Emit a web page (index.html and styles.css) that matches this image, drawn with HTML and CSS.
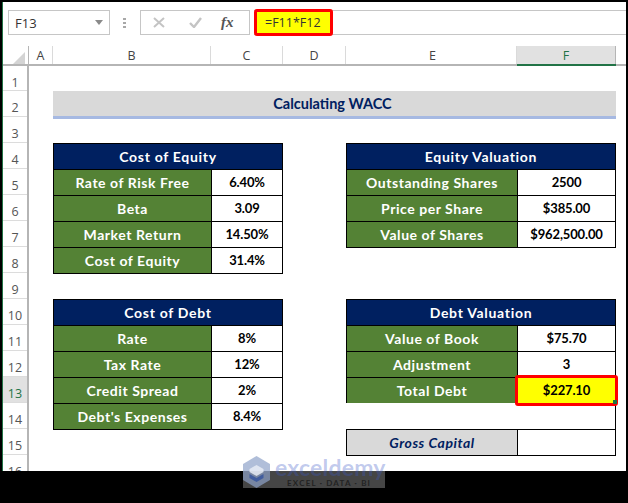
FILE: index.html
```html
<!DOCTYPE html>
<html lang="en">
<head>
<meta charset="utf-8">
<title>Calculating WACC</title>
<link rel="stylesheet" href="styles.css">
</head>
<body>
<div class="app">
  <div class="toolbar">
    <div class="namebox"><span>F13</span><svg class="caret" width="8" height="5" viewBox="0 0 8 5"><path d="M0 0h8L4 5z" fill="#8a8a8a"/></svg></div>
    <svg class="grip" width="4" height="10" viewBox="0 0 4 10"><path d="M0 0h3v2H0zM0 4h3v2H0zM0 8h3v2H0z" fill="#a8a8a8"/></svg>
    <div class="fxbox">
      <svg width="12" height="11" viewBox="0 0 12 11"><path d="M1 1l10 9M11 1L1 10" stroke="#c4c4c4" stroke-width="2" fill="none"/></svg>
      <svg width="13" height="11" viewBox="0 0 13 11"><path d="M1 6l4 4 7-9" stroke="#c4c4c4" stroke-width="2.4" fill="none"/></svg>
      <span class="fx">fx</span>
    </div>
    <div class="formula"><div class="formula-hl">=F11*F12</div></div>
  </div>
  <div class="colheads">
    <div class="corner"><svg width="12" height="12" viewBox="0 0 12 12"><path d="M12 0v12H0z" fill="#d4d4d4"/></svg></div>
    <div class="ch ch-a">A</div>
    <div class="ch ch-b">B</div>
    <div class="ch ch-c">C</div>
    <div class="ch ch-d">D</div>
    <div class="ch ch-e">E</div>
    <div class="ch ch-f">F</div>
  </div>
  <div class="sheet">
    <div class="rowheads">
      <div class="rh rh-first">1</div>
      <div class="rh">2</div>
      <div class="rh">3</div>
      <div class="rh">4</div>
      <div class="rh">5</div>
      <div class="rh">6</div>
      <div class="rh">7</div>
      <div class="rh">8</div>
      <div class="rh">9</div>
      <div class="rh">10</div>
      <div class="rh">11</div>
      <div class="rh">12</div>
      <div class="rh rh-sel">13</div>
      <div class="rh">14</div>
      <div class="rh">15</div>
      <div class="rh">16</div>
    </div>
    <div class="cells">
      <div class="title">Calculating WACC</div>

      <div class="tbl tbl-left tbl-top">
        <div class="th">Cost of Equity</div>
        <div class="lb">Rate of Risk Free</div><div class="val">6.40%</div>
        <div class="lb">Beta</div><div class="val">3.09</div>
        <div class="lb">Market Return</div><div class="val">14.50%</div>
        <div class="lb">Cost of Equity</div><div class="val">31.4%</div>
      </div>

      <div class="tbl tbl-right tbl-top">
        <div class="th">Equity Valuation</div>
        <div class="lb">Outstanding Shares</div><div class="val">2500</div>
        <div class="lb">Price per Share</div><div class="val">$385.00</div>
        <div class="lb">Value of Shares</div><div class="val">$962,500.00</div>
      </div>

      <div class="tbl tbl-left tbl-bottom">
        <div class="th">Cost of Debt</div>
        <div class="lb">Rate</div><div class="val">8%</div>
        <div class="lb">Tax Rate</div><div class="val">12%</div>
        <div class="lb">Credit Spread</div><div class="val">2%</div>
        <div class="lb">Debt's Expenses</div><div class="val">8.4%</div>
      </div>

      <div class="tbl tbl-right tbl-bottom">
        <div class="th">Debt Valuation</div>
        <div class="lb">Value of Book</div><div class="val">$75.70</div>
        <div class="lb">Adjustment</div><div class="val">3</div>
        <div class="lb">Total Debt</div><div class="val val-sel">$227.10</div>
      </div>

      <div class="tbl tbl-right tbl-gross">
        <div class="lb lb-gross">Gross Capital</div><div class="val"></div>
      </div>
    </div>
  </div>
</div>
<div class="watermark">
  <svg class="wm-logo" width="27" height="32" viewBox="0 0 27 32"><path d="M13.500 0L27 8v16l-13.500 8L0 24V8z" fill="#8fa3c9" fill-opacity=".7"/><path d="M13.500 9l7 4v3l-7 4-7-4v-3z" fill="#e8ecf5" fill-opacity=".85"/><path d="M6.500 18l7 4 7-4v4l-7 4-7-4z" fill="#2f4f9e" fill-opacity=".75"/></svg>
  <div class="wm-text">
    <div class="wm-name">exceldemy</div>
    <div class="wm-sub">EXCEL · DATA · BI</div>
  </div>
</div>
</body>
</html>
```
FILE: styles.css
```css
* { box-sizing: border-box; }
html, body { margin: 0; padding: 0; }
body {
  background: #000;
  width: 628px;
  height: 503px;
  overflow: hidden;
  position: relative;
  font-family: "Lato", "Liberation Sans", sans-serif;
}
.app {
  margin: 2px 2px 0 2px;
  width: 624px;
  height: 469px;
  background: #fff;
  border-left: 1px solid #217346;
  overflow: hidden;
}
.toolbar {
  height: 44px;
  display: flex;
  align-items: flex-start;
  padding: 8px 0 0 5px;
  background: #fff;
}
.namebox {
  width: 102px;
  height: 25px;
  border: 1px solid #c6c6c6;
  display: flex;
  align-items: center;
  justify-content: space-between;
  padding: 0 6px 0 6px;
  font: 13px "Open Sans", sans-serif;
  color: #333;
}
.grip { margin: 8px 13px 0 13px; }
.fxbox {
  width: 110px;
  height: 25px;
  border: 1px solid #c6c6c6;
  display: flex;
  align-items: center;
  padding: 0 12px;
  gap: 24px;
}
.fxbox .fx {
  font: italic bold 15px "Liberation Serif", serif;
  color: #555;
  margin-left: -5px;
}
.formula {
  flex: 1;
  height: 25px;
  margin-left: 4px;
  border-top: 1px solid #c6c6c6;
  border-bottom: 1px solid #c6c6c6;
  position: relative;
}
.formula-hl {
  position: absolute;
  left: 0;
  top: -2px;
  width: 79px;
  height: 27px;
  background: #ff0;
  border: 3px solid #f00;
  border-radius: 3px;
  font: 12.500px/21px "Open Sans", sans-serif;
  color: #333;
  padding-left: 8px;
}
.colheads {
  display: flex;
  height: 20px;
  padding-right: 9px;
  border-bottom: 2px solid #b5b5b5;
  font: 12.500px/19px "Open Sans", sans-serif;
  color: #444;
}
.corner {
  width: 25px;
  padding: 4px 0 0 10px;
}
.ch {
  text-align: center;
  border-right: 1px solid #dadada;
}
.ch-a { width: 25px; border-left: 1px solid #b5b5b5; }
.ch-b { width: 158px; }
.ch-c { width: 72px; }
.ch-d { width: 63px; }
.ch-e { width: 171px; padding-left: 3px; }
.ch-f {
  width: 99px;
  background: #e1e1e1;
  border-right: 1px solid #b5b5b5;
  box-shadow: 0 2px 0 #217346;
  color: #217346;
}
.sheet {
  display: flex;
  height: 405px;
}
.rowheads {
  width: 26px;
  flex: none;
  border-right: 2px solid #b5b5b5;
  font: 12.500px/1 "Open Sans", sans-serif;
  color: #555;
  overflow: hidden;
}
.rh {
  height: 26px;
  border-bottom: 1px solid #dcdcdc;
  text-align: center;
  padding-top: 11px;
}
.rh-first { height: 25px; }
.rh-sel {
  background: #e1e1e1;
  color: #217346;
  box-shadow: 2px 0 0 #217346;
  position: relative;
}
.cells {
  flex: 1;
  display: grid;
  grid-template-columns: 24px 158px 72px 63px 171px 99px 1fr;
  grid-template-rows: 25px repeat(15, 26px);
}
.title {
  grid-column: 2 / 7;
  grid-row: 2;
  height: 28px;
  background: #d9d9d9;
  border-bottom: 3px solid #a6b9e2;
  color: #002060;
  font-weight: 700;
  font-size: 14.500px;
  line-height: 25px;
  text-align: center;
  padding-right: 4px;
}
.tbl {
  display: grid;
  grid-auto-rows: 26px;
  margin-bottom: -1px;
  border-right: 1px solid #000;
  border-bottom: 1px solid #000;
  font-weight: 700;
  font-size: 14px;
  text-align: center;
}
.tbl-left { grid-column: 2 / 4; grid-template-columns: 158px 1fr; }
.tbl-right { grid-column: 5 / 7; grid-template-columns: 171px 1fr; }
.tbl-top { grid-row: 4 / span 5; }
.tbl-bottom { grid-row: 10 / span 5; }
.tbl-right.tbl-top { grid-row: 4 / span 4; }
.tbl-gross { grid-row: 15; }
.th {
  grid-column: 1 / -1;
  background: #002060;
  color: #fff;
  border-left: 1px solid #000;
  border-top: 1px solid #000;
  line-height: 26px;
  letter-spacing: .7px;
}
.lb, .val {
  border-left: 1px solid #000;
  border-top: 1px solid #000;
  line-height: 25px;
}
.lb { background: #548235; color: #fff; letter-spacing: .55px; }
.val { background: #fff; color: #000; font-size: 13px; letter-spacing: -.15px; }
.lb-gross {
  background: #d9d9d9;
  color: #002060;
  font-style: italic;
}
.val-sel {
  background: #ff0;
  position: relative;
}
.val-sel::after {
  content: "";
  position: absolute;
  inset: -3px;
  border: 3px solid #f00;
  border-radius: 3px;
}
.val-sel::before {
  content: "";
  position: absolute;
  right: -2px;
  bottom: -1px;
  width: 4px;
  height: 4px;
  background: #217346;
  z-index: 1;
}
.watermark {
  position: absolute;
  left: 243px;
  top: 456px;
  width: 142px;
  height: 32px;
  display: flex;
  gap: 5px;
  background: rgba(255, 255, 255, .27);
}
.wm-logo { flex: none; }
.wm-text { flex: 1; min-width: 0; }
.wm-name {
  font: 700 23px/23px "Lato", sans-serif;
  color: rgba(60, 90, 200, .32);
  letter-spacing: .2px;
}
.wm-sub {
  font: 700 8px/8px "Lato", sans-serif;
  letter-spacing: 1.2px;
  color: #222;
  padding-left: 12px;
}
```
